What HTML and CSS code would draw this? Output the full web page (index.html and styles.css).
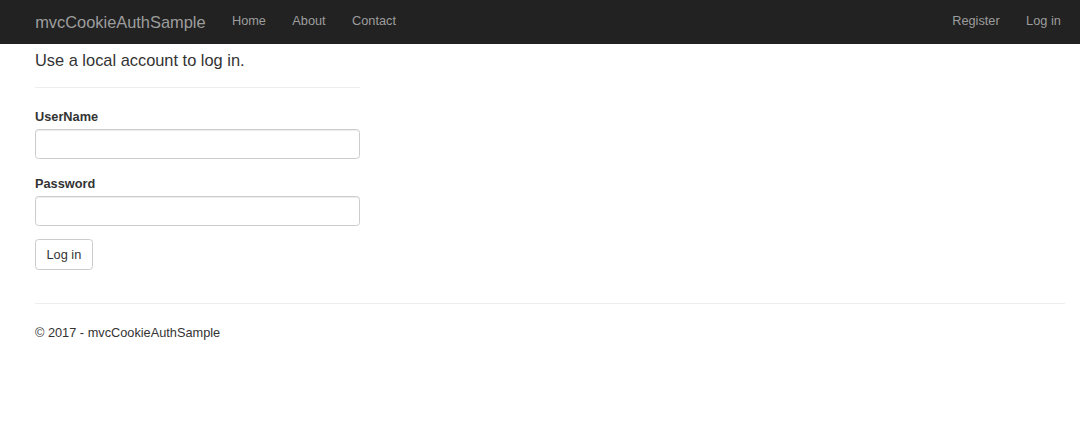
FILE: index.html
```html
<!DOCTYPE html>
<html lang="en">
<head>
<meta charset="utf-8">
<title>Log in - mvcCookieAuthSample</title>
<link rel="stylesheet" href="styles.css">
</head>
<body>
<nav class="navbar">
  <a class="brand" href="#">mvcCookieAuthSample</a>
  <ul class="nav">
    <li><a href="#">Home</a></li>
    <li><a href="#">About</a></li>
    <li><a href="#">Contact</a></li>
  </ul>
  <ul class="nav nav-right">
    <li><a href="#">Register</a></li>
    <li><a href="#">Log in</a></li>
  </ul>
</nav>
<main class="container">
  <section class="login">
    <form>
      <h4 class="title">Use a local account to log in.</h4>
      <hr class="rule">
      <div class="form-group">
        <label class="label" for="UserName">UserName</label>
        <input class="control" id="UserName" type="text">
      </div>
      <div class="form-group">
        <label class="label" for="Password">Password</label>
        <input class="control" id="Password" type="password">
      </div>
      <div class="form-group">
        <button class="btn" type="submit">Log in</button>
      </div>
    </form>
  </section>
  <hr class="rule footer-rule">
  <footer class="footer">
    <p>&copy; 2017 - mvcCookieAuthSample</p>
  </footer>
</main>
</body>
</html>
```

FILE: styles.css
```css
* { box-sizing: border-box; }
html, body { margin: 0; padding: 0; }
body {
  font-family: "Liberation Sans", Arial, sans-serif;
  font-size: 12.75px;
  line-height: 17.6px;
  color: #333;
  background: #fff;
}
a { text-decoration: none; }

.navbar {
  display: flex;
  align-items: stretch;
  height: 44px;
  background: #222;
  padding: 0 6px 0 22px;
}
.brand {
  display: flex;
  align-items: center;
  padding: 0 13.2px;
  font-size: 16.4px;
  color: #9d9d9d;
  line-height: 44px;
}
.nav {
  display: flex;
  list-style: none;
  margin: 0;
  padding: 0;
}
.nav li { display: flex; }
.nav a {
  display: block;
  padding: 0 13.2px;
  line-height: 42px;
  color: #9d9d9d;
}
.nav-right { margin-left: auto; }

.container {
  padding: 0 15px 0 35px;
}
.login { width: 325px; }
form { margin: 0; }
.title {
  margin: 7.8px 0 0;
  font-size: 16.4px;
  line-height: 17.4px;
  font-weight: 500;
  color: #333;
}
.rule {
  margin: 17.6px 0;
  border: 0;
  border-top: 1px solid #eee;
  height: 0;
}
.form-group {
  margin-bottom: 13.2px;
}
.label {
  display: block;
  font-weight: bold;
  padding-top: 3px;
  margin-bottom: 3px;
}
.control {
  display: block;
  width: 100%;
  height: 30px;
  padding: 5.3px 10.5px;
  font: inherit;
  color: #555;
  background: #fff;
  border: 1px solid #ccc;
  border-radius: 3.5px;
  box-shadow: inset 0 1px 1px rgba(0,0,0,.075);
  margin: 0;
}
.btn {
  display: inline-block;
  height: 31px;
  padding: 5.3px 10.5px;
  font: inherit;
  color: #333;
  background: #fff;
  border: 1px solid #ccc;
  border-radius: 3.5px;
  margin: 0;
}
.footer-rule { margin: 33px 0 19.6px; }
.footer p { margin: 0; }
```
